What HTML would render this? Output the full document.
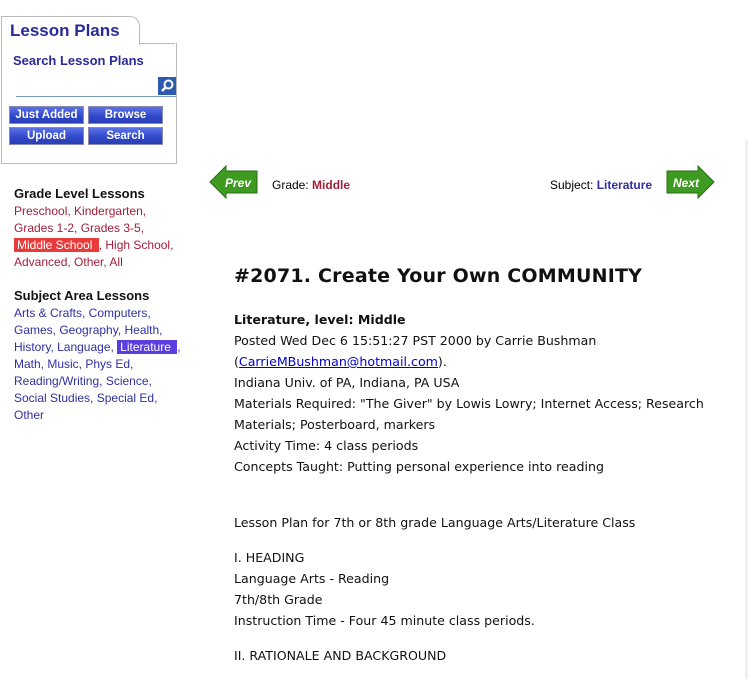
<!DOCTYPE html>
<html><head><style>
body{margin:0;width:748px;height:679px;overflow:hidden;background:#fff;position:relative;font-family:"Liberation Sans",Arial,sans-serif}
.a{position:absolute}
.tab{left:1px;top:16px;width:137px;height:28px;border:1px solid #bbb;border-bottom:none;border-radius:0 10px 0 0;background:#fff;z-index:2}
.tab span{position:absolute;left:8px;top:4px;font-size:17px;font-weight:bold;color:#2a2a9a}
.box{left:1px;top:43px;width:174px;height:120px;border:1px solid #bbb;border-top:none}
.boxtop{left:138px;top:43px;width:37px;border-top:1px solid #bbb}
.btn{position:absolute;width:73px;height:16px;background:linear-gradient(#5b72e6,#2f47c9 60%,#2a3eb5);border:1px solid #8a8ab0;color:#fff;font-weight:bold;font-size:11.5px;text-align:center;line-height:16px}
.side{font-size:12px;line-height:17px;color:#a0203a}
.side b{color:#111;font-size:13px}
.blue{color:#3030a0}
.main{left:234px;font-family:"DejaVu Sans",Tahoma,sans-serif;font-size:12.6px;line-height:21px;color:#111}
</style></head><body>
<div class="a tab"><span>Lesson Plans</span></div>
<div class="a box"></div>
<div class="a boxtop"></div>
<div class="a" style="left:13px;top:53px;font-size:13px;font-weight:bold;color:#2a2a9a">Search Lesson Plans</div>
<div class="a" style="left:16px;top:96px;width:160px;border-top:1px solid #7a9ab8"></div>
<div class="a" style="left:158px;top:77px;width:18px;height:18px;background:#2d5bb0"><svg width="18" height="18"><circle cx="10.5" cy="7.5" r="4" fill="none" stroke="#fff" stroke-width="2"/><line x1="8" y1="10" x2="4" y2="14" stroke="#fff" stroke-width="2.5"/></svg></div>
<div class="btn" style="left:9px;top:106px">Just Added</div>
<div class="btn" style="left:88px;top:106px">Browse</div>
<div class="btn" style="left:9px;top:127px">Upload</div>
<div class="btn" style="left:88px;top:127px">Search</div>

<div class="a side" style="left:14px;top:185px;width:180px">
<b>Grade Level Lessons</b><br>Preschool, Kindergarten,<br>Grades 1-2, Grades 3-5,<br><span style="background:#e83c3c;color:#fff;padding:0 3px"> Middle School </span>, High School,<br>Advanced, Other, All<br><div style="height:16px"></div>
<b>Subject Area Lessons</b><br><span class="blue">Arts &amp; Crafts, Computers,<br>Games, Geography, Health,<br>History, Language, <span style="background:#5a3ee0;color:#fff;padding:0 3px"> Literature </span>,<br>Math, Music, Phys Ed,<br>Reading/Writing, Science,<br>Social Studies, Special Ed,<br>Other</span>
</div>

<svg class="a" style="left:209px;top:165px" width="50" height="34"><path d="M1 17 L17 1 L17 6 L48 6 L48 28 L17 28 L17 33 Z" fill="#3f9a22" stroke="#2a6e16"/><text x="16" y="22" font-family="Liberation Sans" font-weight="bold" font-style="italic" font-size="12" fill="#fff">Prev</text></svg>
<div class="a" style="left:272px;top:178px;font-size:12px">Grade: <b style="color:#a0203a">Middle</b></div>
<div class="a" style="left:550px;top:178px;font-size:12px">Subject: <b style="color:#3030a0">Literature</b></div>
<svg class="a" style="left:666px;top:165px" width="50" height="34"><path d="M1 6 L32 6 L32 1 L48 17 L32 33 L32 28 L1 28 Z" fill="#3f9a22" stroke="#2a6e16"/><text x="7" y="22" font-family="Liberation Sans" font-weight="bold" font-style="italic" font-size="12" fill="#fff">Next</text></svg>
<div class="a" style="left:745px;top:140px;width:3px;height:539px;background:#f0f0f0"></div>

<div class="a main" style="top:266px;font-size:19px;font-weight:bold;letter-spacing:0.2px">#2071. Create Your Own COMMUNITY</div>
<div class="a main" style="top:309px;width:500px">
<b>Literature, level: Middle</b><br>Posted Wed Dec 6 15:51:27 PST 2000 by Carrie Bushman<br>(<span style="color:#00c;text-decoration:underline">CarrieMBushman@hotmail.com</span>).<br>Indiana Univ. of PA, Indiana, PA USA<br>Materials Required: "The Giver" by Lowis Lowry; Internet Access; Research<br>Materials; Posterboard, markers<br>Activity Time: 4 class periods<br>Concepts Taught: Putting personal experience into reading
</div>
<div class="a main" style="top:512px">Lesson Plan for 7th or 8th grade Language Arts/Literature Class</div>
<div class="a main" style="top:547px">I. HEADING<br>Language Arts - Reading<br>7th/8th Grade<br>Instruction Time - Four 45 minute class periods.</div>
<div class="a main" style="top:645px">II. RATIONALE AND BACKGROUND</div>
</body></html>
